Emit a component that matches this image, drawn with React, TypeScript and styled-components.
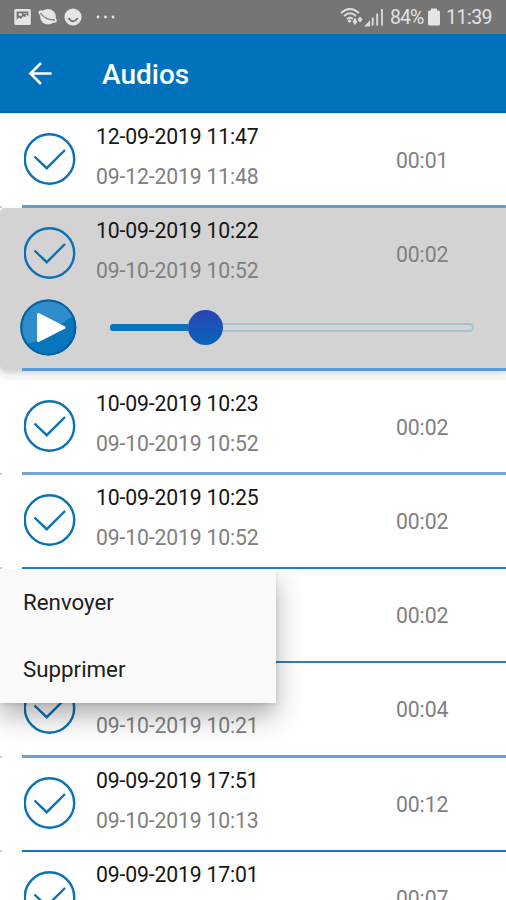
import React from "react";
import styled, { createGlobalStyle } from "styled-components";

const GlobalStyle = createGlobalStyle`
  * { box-sizing: border-box; }
  body { margin: 0; background: #fff; font-family: Roboto, "Liberation Sans", sans-serif; }
`;

const Screen = styled.div`
  position: relative;
  display: flex;
  flex-direction: column;
  width: 506px;
  height: 900px;
  overflow: hidden;
  background: #fefefe;
`;

const StatusBar = styled.header`
  display: flex;
  flex: none;
  align-items: center;
  justify-content: space-between;
  height: 34px;
  padding: 0 14px;
  background: #757575;
  color: #e2e2e2;
`;

const StatusGroup = styled.div`
  display: flex;
  align-items: center;
  svg { display: block; flex: none; }
`;

const StatusText = styled.span<{ $width: number; $left: number; $tracking: number }>`
  width: ${(p) => p.$width}px;
  margin-left: ${(p) => p.$left}px;
  padding-top: 1px;
  font-size: 19.5px;
  line-height: 34px;
  letter-spacing: ${(p) => p.$tracking}px;
  white-space: nowrap;
`;

const AppBar = styled.div`
  display: flex;
  flex: none;
  align-items: center;
  height: 79px;
  padding: 0 28px;
  background: #0071bc;
  border-bottom: 2px solid #0065b0;
  color: #fff;
`;

const BackButton = styled.button`
  display: flex;
  width: 24px;
  height: 24px;
  padding: 0;
  border: 0;
  background: none;
  color: inherit;
`;

const Title = styled.h1`
  margin: 5px 0 0 50px;
  font-size: 28px;
  font-weight: 500;
  line-height: 36px;
`;

const List = styled.main`
  display: flex;
  flex: none;
  flex-direction: column;
  border-top: 1px solid #e3e5ee;
`;

const Item = styled.article<{ $open?: boolean; $height: number }>`
  display: flex;
  flex: none;
  flex-direction: column;
  justify-content: space-between;
  height: ${(p) => p.$height}px;
  margin-bottom: ${(p) => (p.$open ? 11 : 0)}px;
  background: ${(p) => (p.$open ? "#d3d3d3" : "transparent")};
  border-radius: ${(p) => (p.$open ? "5px 0 0 5px" : "0")};
  box-shadow: ${(p) => (p.$open ? "0 3px 5px rgba(0, 0, 0, 0.14), 0 10px 0 #f6f7f7" : "none")};
`;

const Summary = styled.div`
  display: grid;
  grid-template-columns: 72px 300px 1fr;
  height: 91px;
  padding-left: 24px;
`;

const CheckSlot = styled.div`
  padding-top: 19px;
  svg { display: block; }
`;

const Dates = styled.div`
  display: flex;
  flex-direction: column;
  padding-top: 3px;
`;

const DateText = styled.span<{ $muted?: boolean }>`
  height: 40px;
  color: ${(p) => (p.$muted ? "#808080" : "#161616")};
  font-size: 21.2px;
  letter-spacing: -0.15px;
  line-height: 40px;
  white-space: nowrap;
`;

const Duration = styled.span`
  color: #808080;
  font-size: 21.2px;
  letter-spacing: -0.1px;
  line-height: 93px;
`;

const Player = styled.div`
  display: flex;
  align-items: center;
  flex: 1;
  padding: 0 32px 12px 20px;
  svg { display: block; flex: none; }
`;

const Slider = styled.div`
  display: flex;
  align-items: center;
  width: 364px;
  margin-left: 33px;
`;

const Played = styled.div`
  width: 78px;
  height: 7px;
  border-radius: 3px 0 0 3px;
  background: #0874bd;
`;

const Thumb = styled.div`
  width: 35px;
  height: 35px;
  border-radius: 50%;
  background: linear-gradient(#2945b1, #0764bb);
`;

const Remaining = styled.div`
  flex: 1;
  height: 9px;
  border: 2px solid #a6c1d0;
  border-left: 0;
  border-radius: 0 5px 5px 0;
`;

const Divider = styled.div`
  display: flex;
  align-items: center;
  justify-content: space-between;
`;

const Tick = styled.i<{ $hidden?: boolean }>`
  width: 2px;
  height: 2px;
  background: ${(p) => (p.$hidden ? "transparent" : "#ccc")};
`;

const Line = styled.div<{ $color: string; $thick: number }>`
  width: 484px;
  height: ${(p) => p.$thick}px;
  background: ${(p) => p.$color};
`;

const Menu = styled.nav`
  position: absolute;
  top: 569px;
  left: 0;
  display: flex;
  flex-direction: column;
  width: 276px;
  height: 134px;
  background: #fafafa;
  box-shadow: 0 13px 24px rgba(0, 0, 0, 0.3), 0 1px 4px rgba(0, 0, 0, 0.12);
  clip-path: inset(0 -50px -70px 0);
`;

const MenuItem = styled.button`
  height: 67.5px;
  padding: 0 0 0 23px;
  border: 0;
  background: none;
  color: #202020;
  font-family: inherit;
  font-size: 22.3px;
  line-height: 67px;
  text-align: left;
`;

const CheckIcon = () => (
  <svg width="52" height="52" viewBox="0 0 52 52" fill="none" stroke="#0b72b5" strokeWidth="2.4">
    <circle cx="25.5" cy="26" r="24.7" />
    <path d="M10.5 23.5 22.7 35.2 41 17" />
  </svg>
);

const PlayIcon = () => (
  <svg width="57" height="57" viewBox="0 0 57 57">
    <defs>
      <clipPath id="disc"><circle cx="28.3" cy="28.5" r="27" /></clipPath>
    </defs>
    <circle cx="28.3" cy="28.5" r="28" fill="#07619e" />
    <circle cx="28.3" cy="28.5" r="26.5" fill="#0875bd" />
    <path d="M0 0H57V15Q42 23 31 34Q17 45 2 45Z" fill="#308dcc" clipPath="url(#disc)" />
    <circle cx="28.3" cy="28.5" r="27" fill="none" stroke="#07619e" strokeWidth="2" />
    <path d="M18.5 15.5 44 28.5 18.5 41.5Z" fill="#fff" stroke="#fff" strokeWidth="3" strokeLinejoin="round" />
  </svg>
);

const NotificationIcons = () => (
  <svg width="104" height="20" viewBox="14 7 104 20" fill="#e5e5e5">
    <rect x="14.3" y="9" width="16.5" height="16" rx="1.5" />
    <path d="M16.6 11.5H28.4V16.5L25.8 14.2V17L23 16.2 21 19 19 17.5 16.6 20Z" fill="#757575" />
    <path d="M19 13.5h2.5v2H19ZM23.5 13.5H27" fill="#e5e5e5" stroke="#e5e5e5" strokeWidth=".6" />
    <ellipse cx="48" cy="16.8" rx="7.8" ry="7.7" />
    <ellipse cx="47.7" cy="16.6" rx="10.4" ry="4" transform="rotate(30 47.7 16.6)" />
    <path d="M40.5 13Q45 20 55 20" fill="none" stroke="#757575" strokeWidth="1.3" />
    <circle cx="73" cy="17" r="8.6" />
    <path d="M68.5 18Q73 24.5 77.8 18" fill="none" stroke="#757575" strokeWidth="2" />
    <circle cx="98" cy="17" r="1.4" /><circle cx="105.5" cy="17" r="1.4" /><circle cx="113" cy="17" r="1.4" />
  </svg>
);

const NetworkIcons = () => (
  <svg width="45" height="20" viewBox="340 7 45 20" fill="none" stroke="#dedede" strokeWidth="1.8">
    <path d="M341 13Q350 5 359 13M344 16Q350 10.5 356 16M347 19Q350 16.5 353 19" />
    <path d="m349.5 19 2 2-2 2-2-2Z" fill="#dedede" stroke="none" />
    <path d="M352.5 21.5h5l-2.5 3.5ZM355 17.5l2 4h-4ZM357.5 19.5h5L360 16.5ZM357.5 19.5h5L360 22.5Z" fill="#dedede" stroke="none" />
    <path d="M366.2 25.5h3v-3ZM372.7 25.5V17.5M377.2 25.5V13.5M382 25.5V9" />
  </svg>
);

const BatteryIcon = () => (
  <svg width="12" height="18" viewBox="0 0 12 18" fill="#e5e5e5">
    <path d="M3 0.5h6V2.5h1.5Q12 2.5 12 4v12Q12 17.5 10.5 17.5h-9Q0 17.5 0 16v-12Q0 2.5 1.5 2.5H3Z" />
  </svg>
);

const BackIcon = () => (
  <svg width="24" height="24" viewBox="0 0 24 24" fill="none" stroke="currentColor" strokeWidth="2.6">
    <path d="M23.5 12.5H3M13 2 2.5 12.5 13 23" />
  </svg>
);

type Recording = {
  id: number;
  recorded?: string;
  sent?: string;
  duration: string;
  height: number;
  color: string;
  thick: number;
  open?: boolean;
};

const recordings: Recording[] = [
  { id: 1, recorded: "12-09-2019 11:47", sent: "09-12-2019 11:48", duration: "00:01", height: 94, color: "#669fd6", thick: 3 },
  { id: 2, recorded: "10-09-2019 10:22", sent: "09-10-2019 10:52", duration: "00:02", height: 162, color: "#5c9ad8", thick: 3, open: true },
  { id: 3, recorded: "10-09-2019 10:23", sent: "09-10-2019 10:52", duration: "00:02", height: 94, color: "#71a5d3", thick: 3 },
  { id: 4, recorded: "10-09-2019 10:25", sent: "09-10-2019 10:52", duration: "00:02", height: 94, color: "#1d7fc6", thick: 2 },
  { id: 5, duration: "00:02", height: 94, color: "#2d7fc0", thick: 2 },
  { id: 6, sent: "09-10-2019 10:21", duration: "00:04", height: 95, color: "#6aa0d3", thick: 3 },
  { id: 7, recorded: "09-09-2019 17:51", sent: "09-10-2019 10:13", duration: "00:12", height: 94, color: "#1773b8", thick: 2 },
  { id: 8, recorded: "09-09-2019 17:01", duration: "00:07", height: 94, color: "#1773b8", thick: 2 },
];

const AudioItem = ({ item }: { item: Recording }) => (
  <Item $open={item.open} $height={item.height}>
    <Summary>
      <CheckSlot><CheckIcon /></CheckSlot>
      <Dates>
        <DateText>{item.recorded}</DateText>
        <DateText $muted>{item.sent}</DateText>
      </Dates>
      <Duration>{item.duration}</Duration>
    </Summary>
    {item.open && (
      <Player>
        <PlayIcon />
        <Slider><Played /><Thumb /><Remaining /></Slider>
      </Player>
    )}
    <Divider>
      <Tick $hidden={item.open} />
      <Line $color={item.color} $thick={item.thick} />
    </Divider>
  </Item>
);

export default function App() {
  return (
    <>
      <GlobalStyle />
      <Screen>
        <StatusBar>
          <StatusGroup><NotificationIcons /></StatusGroup>
          <StatusGroup>
            <NetworkIcons />
            <StatusText $width={38} $left={5} $tracking={-1}>84%</StatusText>
            <BatteryIcon />
            <StatusText $width={46} $left={6} $tracking={-0.5}>11:39</StatusText>
          </StatusGroup>
        </StatusBar>
        <AppBar>
          <BackButton aria-label="Retour"><BackIcon /></BackButton>
          <Title>Audios</Title>
        </AppBar>
        <List>
          {recordings.map((item) => <AudioItem key={item.id} item={item} />)}
        </List>
        <Menu>
          <MenuItem>Renvoyer</MenuItem>
          <MenuItem>Supprimer</MenuItem>
        </Menu>
      </Screen>
    </>
  );
}
